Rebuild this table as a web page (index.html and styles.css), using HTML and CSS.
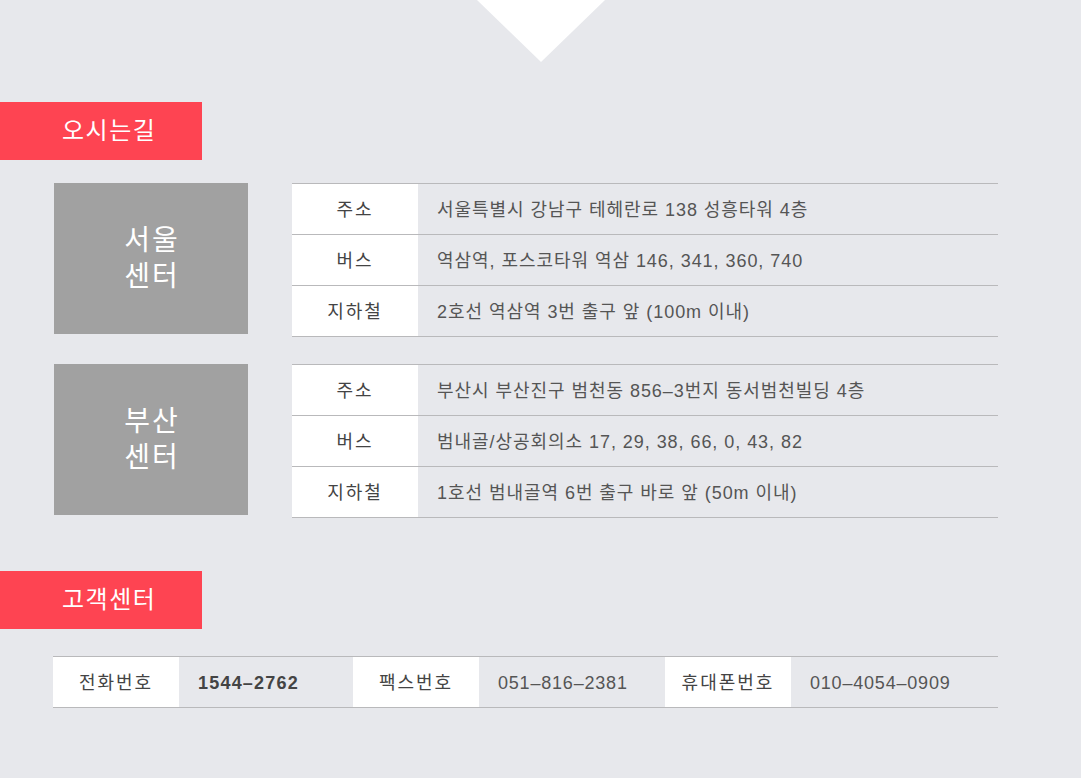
FILE: index.html
```html
<!DOCTYPE html>
<html lang="ko">
<head>
<meta charset="utf-8">
<title>오시는길</title>
<link rel="stylesheet" href="styles.css">
</head>
<body>
<div class="arrow"></div>

<h2 class="section-title">오시는길</h2>

<div class="location">
  <div class="loc-name">서울<br>센터</div>
  <div class="info">
    <div class="row"><div class="label">주소</div><div class="value">서울특별시 강남구 테헤란로 138 성흥타워 4층</div></div>
    <div class="row"><div class="label">버스</div><div class="value">역삼역, 포스코타워 역삼 146, 341, 360, 740</div></div>
    <div class="row"><div class="label">지하철</div><div class="value">2호선 역삼역 3번 출구 앞 (100m 이내)</div></div>
  </div>
</div>

<div class="location second">
  <div class="loc-name">부산<br>센터</div>
  <div class="info">
    <div class="row"><div class="label">주소</div><div class="value">부산시 부산진구 범천동 856–3번지 동서범천빌딩 4층</div></div>
    <div class="row"><div class="label">버스</div><div class="value">범내골/상공회의소 17, 29, 38, 66, 0, 43, 82</div></div>
    <div class="row"><div class="label">지하철</div><div class="value">1호선 범내골역 6번 출구 바로 앞 (50m 이내)</div></div>
  </div>
</div>

<h2 class="section-title cs">고객센터</h2>

<div class="contact">
  <div class="c-label">전화번호</div>
  <div class="c-value strong">1544–2762</div>
  <div class="c-label">팩스번호</div>
  <div class="c-value">051–816–2381</div>
  <div class="c-label">휴대폰번호</div>
  <div class="c-value">010–4054–0909</div>
</div>
</body>
</html>
```

FILE: styles.css
```css
html, body {
  margin: 0;
  padding: 0;
}
body {
  background: #e7e8ec;
  font-family: "Liberation Sans", "Noto Sans CJK KR", sans-serif;
  color: #555;
  width: 1081px;
  height: 778px;
  overflow: hidden;
}
.arrow {
  width: 0;
  height: 0;
  margin: 0 auto;
  border-left: 64px solid transparent;
  border-right: 64px solid transparent;
  border-top: 62px solid #ffffff;
}
.section-title {
  margin: 40px 0 0 0;
  width: 202px;
  height: 58px;
  box-sizing: border-box;
  padding-left: 62px;
  background: #fe4452;
  color: #fff;
  font-size: 24px;
  font-weight: normal;
  line-height: 58px;
  letter-spacing: 1.5px;
}
.section-title.cs {
  margin-top: 53px;
}
.location {
  display: flex;
  margin: 23px 0 0 54px;
  align-items: flex-start;
}
.location.second {
  margin-top: 27px;
}
.loc-name {
  width: 194px;
  height: 151px;
  background: #a1a1a1;
  color: #fff;
  font-size: 28px;
  line-height: 36px;
  display: flex;
  align-items: center;
  justify-content: center;
  text-align: center;
  letter-spacing: 2px;
  padding-left: 2px;
  box-sizing: border-box;
}
.info {
  margin-left: 44px;
  width: 706px;
  border-top: 1px solid #b9b9bb;
}
.row {
  display: flex;
  height: 50px;
  border-bottom: 1px solid #b9b9bb;
}
.label {
  width: 126px;
  background: #fff;
  color: #444;
  text-align: center;
  font-size: 18px;
  padding-top: 3px;
  line-height: 47px;
  letter-spacing: 2px;
}
.value {
  flex: 1;
  padding-left: 19px;
  padding-top: 3px;
  font-size: 18px;
  line-height: 47px;
  letter-spacing: 0.95px;
  color: #555;
}
.contact {
  display: grid;
  grid-template-columns: 126px 174px 126px 186px 126px 1fr;
  margin: 27px 0 0 53px;
  width: 945px;
  height: 50px;
  border-top: 1px solid #b9b9bb;
  border-bottom: 1px solid #b9b9bb;
  font-size: 18px;
  line-height: 50px;
}
.c-label {
  background: #fff;
  color: #444;
  text-align: center;
  letter-spacing: 2px;
  padding-top: 2px;
  line-height: 48px;
}
.c-value {
  padding-left: 19px;
  color: #555;
  letter-spacing: 0.8px;
  padding-top: 2px;
  line-height: 48px;
}
.c-value.strong {
  font-weight: bold;
  color: #444;
  letter-spacing: 1.2px;
}
```
